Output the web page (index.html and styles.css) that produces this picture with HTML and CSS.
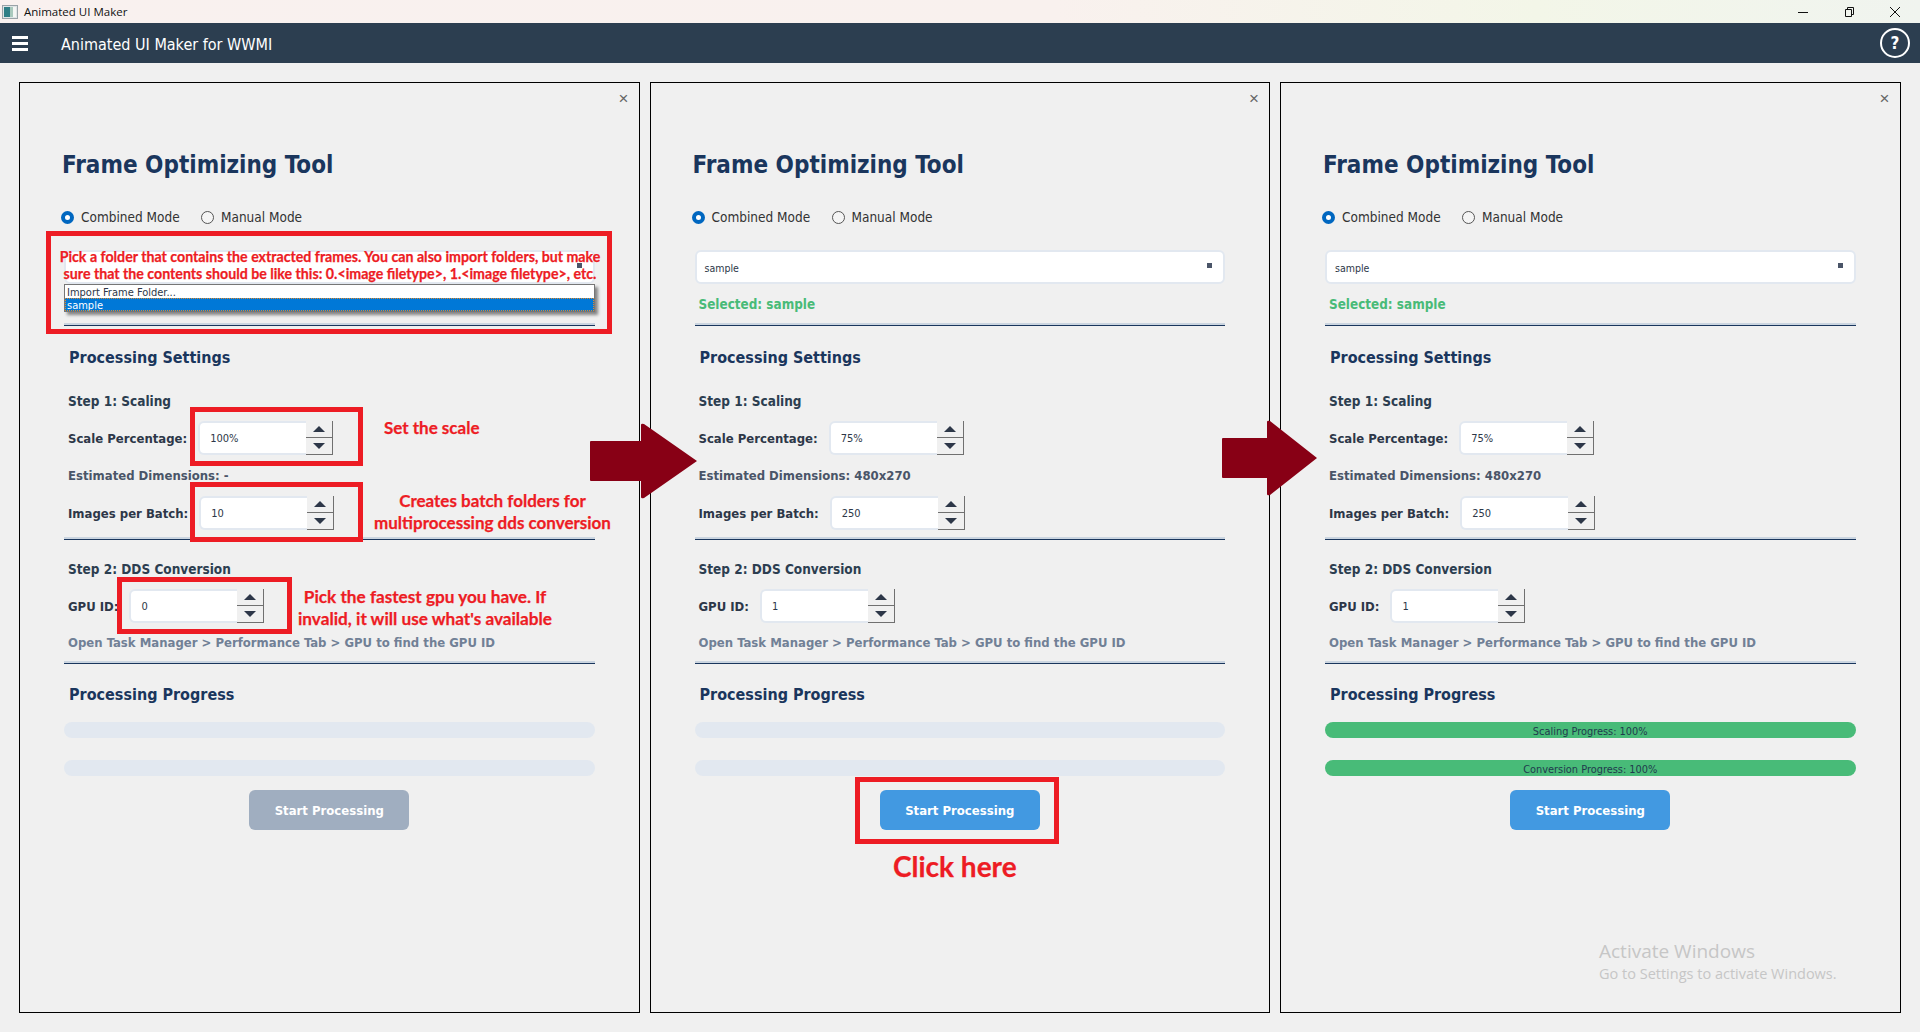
FILE: index.html
```html
<!DOCTYPE html>
<html lang="en">
<head>
    <meta charset="UTF-8">
    <meta name="viewport" content="width=device-width, initial-scale=1.0">
    <title>Animated UI Maker</title>
    <link rel="stylesheet" href="styles.css">
</head>
<body>

    <div class="titlebar">
        <svg class="app-icon" width="16" height="14" viewBox="0 0 16 14">
            <rect x="0.5" y="0.5" width="15" height="13" fill="#dfe5e6" stroke="#9aa3a8"/>
            <rect x="2" y="2" width="6" height="10" fill="#2f7f86"/>
            <rect x="8" y="2" width="3" height="10" fill="#a9c9bd"/>
            <rect x="11" y="2" width="3" height="10" fill="#f4f6f4"/>
        </svg>
        <span class="titlebar-text">Animated UI Maker</span>
        <div class="win-controls">
            <svg width="12" height="12" viewBox="0 0 12 12"><path d="M1 6.5h10" stroke="#111" fill="none"/></svg>
            <svg width="12" height="12" viewBox="0 0 12 12"><path d="M2.5 3.5h6v7h-6zM4.5 3.5v-2h6v7h-2" stroke="#111" fill="none"/></svg>
            <svg width="12" height="12" viewBox="0 0 12 12"><path d="M1 1l10 10M11 1L1 11" stroke="#111" fill="none"/></svg>
        </div>
    </div>

    <header class="appbar">
        <div class="hamburger"><span></span><span></span><span></span></div>
        <div class="appbar-title">Animated UI Maker for WWMI</div>
        <div class="help">?</div>
    </header>

    <main class="panels">

        <!-- panel 1 : annotated, nothing selected -->
        <section class="panel">
            <div class="close">&#215;</div>
            <h1>Frame Optimizing Tool</h1>
            <div class="modes">
                <span class="radio checked"></span><span class="mode-label">Combined Mode</span>
                <span class="radio"></span><span class="mode-label">Manual Mode</span>
            </div>
            <div class="select"><i></i></div>
            <div class="selected"></div>
            <div class="divider first"></div>
            <h2>Processing Settings</h2>
            <h3>Step 1: Scaling</h3>
            <div class="field">
                <label>Scale Percentage:</label>
                <div class="spin"><span class="spin-value">100%</span><div class="spin-btns"><b class="up"></b><b class="down"></b></div></div>
            </div>
            <div class="info">Estimated Dimensions: -</div>
            <div class="field second">
                <label>Images per Batch:</label>
                <div class="spin"><span class="spin-value">10</span><div class="spin-btns"><b class="up"></b><b class="down"></b></div></div>
            </div>
            <div class="divider mid"></div>
            <h3 class="step-two">Step 2: DDS Conversion</h3>
            <div class="field">
                <label>GPU ID:</label>
                <div class="spin"><span class="spin-value">0</span><div class="spin-btns"><b class="up"></b><b class="down"></b></div></div>
            </div>
            <div class="hint">Open Task Manager &gt; Performance Tab &gt; GPU to find the GPU ID</div>
            <div class="divider last"></div>
            <h2 class="progress-title">Processing Progress</h2>
            <div class="bar"></div>
            <div class="bar bar-two"></div>
            <button class="start" disabled>Start Processing</button>
        </section>

        <!-- panel 2 : ready to start -->
        <section class="panel">
            <div class="close">&#215;</div>
            <h1>Frame Optimizing Tool</h1>
            <div class="modes">
                <span class="radio checked"></span><span class="mode-label">Combined Mode</span>
                <span class="radio"></span><span class="mode-label">Manual Mode</span>
            </div>
            <div class="select">sample<i></i></div>
            <div class="selected">Selected: sample</div>
            <div class="divider first"></div>
            <h2>Processing Settings</h2>
            <h3>Step 1: Scaling</h3>
            <div class="field">
                <label>Scale Percentage:</label>
                <div class="spin"><span class="spin-value">75%</span><div class="spin-btns"><b class="up"></b><b class="down"></b></div></div>
            </div>
            <div class="info">Estimated Dimensions: 480x270</div>
            <div class="field second">
                <label>Images per Batch:</label>
                <div class="spin"><span class="spin-value">250</span><div class="spin-btns"><b class="up"></b><b class="down"></b></div></div>
            </div>
            <div class="divider mid"></div>
            <h3 class="step-two">Step 2: DDS Conversion</h3>
            <div class="field">
                <label>GPU ID:</label>
                <div class="spin"><span class="spin-value">1</span><div class="spin-btns"><b class="up"></b><b class="down"></b></div></div>
            </div>
            <div class="hint">Open Task Manager &gt; Performance Tab &gt; GPU to find the GPU ID</div>
            <div class="divider last"></div>
            <h2 class="progress-title">Processing Progress</h2>
            <div class="bar"></div>
            <div class="bar bar-two"></div>
            <button class="start">Start Processing</button>
        </section>

        <!-- panel 3 : finished -->
        <section class="panel">
            <div class="close">&#215;</div>
            <h1>Frame Optimizing Tool</h1>
            <div class="modes">
                <span class="radio checked"></span><span class="mode-label">Combined Mode</span>
                <span class="radio"></span><span class="mode-label">Manual Mode</span>
            </div>
            <div class="select">sample<i></i></div>
            <div class="selected">Selected: sample</div>
            <div class="divider first"></div>
            <h2>Processing Settings</h2>
            <h3>Step 1: Scaling</h3>
            <div class="field">
                <label>Scale Percentage:</label>
                <div class="spin"><span class="spin-value">75%</span><div class="spin-btns"><b class="up"></b><b class="down"></b></div></div>
            </div>
            <div class="info">Estimated Dimensions: 480x270</div>
            <div class="field second">
                <label>Images per Batch:</label>
                <div class="spin"><span class="spin-value">250</span><div class="spin-btns"><b class="up"></b><b class="down"></b></div></div>
            </div>
            <div class="divider mid"></div>
            <h3 class="step-two">Step 2: DDS Conversion</h3>
            <div class="field">
                <label>GPU ID:</label>
                <div class="spin"><span class="spin-value">1</span><div class="spin-btns"><b class="up"></b><b class="down"></b></div></div>
            </div>
            <div class="hint">Open Task Manager &gt; Performance Tab &gt; GPU to find the GPU ID</div>
            <div class="divider last"></div>
            <h2 class="progress-title">Processing Progress</h2>
            <div class="bar done">Scaling Progress: 100%</div>
            <div class="bar bar-two done">Conversion Progress: 100%</div>
            <button class="start">Start Processing</button>
        </section>
    </main>

    <!-- things drawn on top of the screenshot -->
    <div class="dropdown">
        <div class="dropdown-item">Import Frame Folder...</div>
        <div class="dropdown-item active">sample</div>
    </div>

    <div class="mark mark-folder"></div>
    <div class="mark mark-scale"></div>
    <div class="mark mark-batch"></div>
    <div class="mark mark-gpu"></div>
    <div class="mark mark-start"></div>

    <div class="note note-folder">Pick a folder that contains the extracted frames. You can also import folders, but make<br>sure that the contents should be like this: 0.&lt;image filetype&gt;, 1.&lt;image filetype&gt;, etc.</div>
    <div class="note note-scale">Set the scale</div>
    <div class="note note-batch">Creates batch folders for<br>multiprocessing dds conversion</div>
    <div class="note note-gpu">Pick the fastest gpu you have. If<br>invalid, it will use what's available</div>
    <div class="note note-click">Click here</div>

    <svg class="arrow arrow-one" width="108" height="76" viewBox="0 0 108 76">
        <path d="M1 18h50V2q0-2 3-1l53 37-53 37q-3 1-3-1V58H1q-1 0-1-1V19q0-1 1-1z" fill="#880015"/>
    </svg>
    <svg class="arrow arrow-two" width="96" height="76" viewBox="0 0 96 76">
        <path d="M1 18h44V2q0-2 3-1l47 37-47 37q-3 1-3-1V58H1q-1 0-1-1V19q0-1 1-1z" fill="#880015"/>
    </svg>

    <div class="watermark">
        <div class="watermark-title">Activate Windows</div>
        <div class="watermark-text">Go to Settings to activate Windows.</div>
    </div>

</body>
</html>
```

FILE: styles.css
```css
/* general */
body {
    margin: 0;
    height: 1032px;
    overflow: hidden;
    background-color: #f0f0f0;
    font-family: "DejaVu Sans Condensed", "DejaVu Sans", sans-serif;
    color: #2d3748;
}

/* window title bar */
.titlebar {
    height: 23px;
    display: flex;
    align-items: center;
    background: linear-gradient(90deg, #f9f1ef 0%, #f9f1ee 55%, #f3f6e8 80%, #f0f4ef 100%);
}

.app-icon {
    margin-left: 2px;
    margin-right: 6px;
}

.titlebar-text {
    font-family: "Open Sans", sans-serif;
    font-size: 11.5px;
    color: #111;
}

.win-controls {
    margin-left: auto;
    margin-right: 19px;
    display: flex;
    gap: 34px;
}

/* app bar */
.appbar {
    height: 40px;
    display: flex;
    align-items: center;
    background-color: #2c3e50;
    color: white;
}

.hamburger {
    margin-left: 12px;
    width: 16px;
    display: flex;
    flex-direction: column;
    gap: 3px;
}

.hamburger span {
    height: 3px;
    background-color: white;
}

.appbar-title {
    margin-left: 33px;
    padding-top: 2px;
    font-size: 16px;
}

.help {
    margin-left: auto;
    margin-right: 10px;
    width: 26px;
    height: 26px;
    border: 2px solid white;
    border-radius: 50%;
    text-align: center;
    line-height: 26px;
    font-size: 17px;
    font-weight: bold;
}

/* panels */
.panels {
    display: flex;
    gap: 10px;
    padding-top: 19px;
    padding-left: 19px;
}

.panel {
    position: relative;
    box-sizing: border-box;
    width: 620.5px;
    height: 931px;
    padding: 0 44px;
    border: 1px solid black;
}

.close {
    position: absolute;
    top: 6px;
    right: 10px;
    font-family: "Liberation Sans", sans-serif;
    font-size: 17px;
    line-height: 20px;
    color: #666;
}

h1 {
    margin: 67px 0 0 -2px;
    font-size: 24px;
    line-height: 30px;
    font-weight: bold;
    color: #1a365d;
}

.modes {
    margin-top: 27px;
    height: 20px;
    display: flex;
    align-items: center;
    margin-left: -3px;
}

.radio {
    box-sizing: border-box;
    width: 13px;
    height: 13px;
    border: 1px solid #555;
    border-radius: 50%;
    background-color: #f5f5f5;
    margin-right: 7px;
}

.radio.checked {
    border: 4px solid #0067c0;
    background-color: white;
}

.mode-label {
    font-size: 13.5px;
    width: 120px;
    color: #333;
}

.select {
    position: relative;
    box-sizing: border-box;
    margin-top: 23px;
    height: 34px;
    padding-left: 8px;
    line-height: 32px;
    font-size: 10.5px;
    color: #2d3748;
    background-color: white;
    border: 2px solid #e2e8f0;
    border-radius: 6px;
}

.select i {
    position: absolute;
    top: 11px;
    right: 11px;
    width: 5px;
    height: 5px;
    background-color: #4a5568;
}

.selected {
    margin-top: 12px;
    height: 18px;
    margin-left: 4px;
    line-height: 18px;
    font-size: 13.4px;
    font-weight: bold;
    color: #48bb78;
}

.divider {
    height: 2px;
    background-color: #cbd5e0;
    border-bottom: 1px solid #1a365d;
}

.divider.first {
    margin-top: 9px;
}

.divider.mid {
    margin-top: 7px;
}

.divider.last {
    margin-top: 9px;
}

h2 {
    margin: 21px 0 0 5px;
    font-size: 16px;
    line-height: 22px;
    font-weight: bold;
    color: #1a365d;
}

h2.progress-title {
    margin-top: 20px;
}

h3 {
    margin: 23px 0 0 4px;
    font-size: 13.5px;
    line-height: 18px;
    font-weight: bold;
    color: #2c3e50;
}

h3.step-two {
    margin-top: 20px;
}

.field {
    margin-top: 11px;
    margin-left: 4px;
    height: 34px;
    display: flex;
    align-items: center;
    gap: 11px;
}

.field.second {
    margin-top: 11px;
}

.field label {
    font-size: 13px;
    font-weight: bold;
    color: #2d3748;
}

.spin {
    box-sizing: border-box;
    width: 135px;
    height: 34px;
    display: flex;
    background-color: white;
    border: 2px solid #e2e8f0;
    border-right: none;
    border-radius: 6px 0 0 6px;
}

.spin-value {
    flex: 1;
    padding-left: 10px;
    line-height: 32px;
    font-size: 11px;
}

.spin-btns {
    margin: -2px 0;
    width: 27px;
    display: flex;
    flex-direction: column;
    background-color: #f0f0f0;
}

.spin-btns b {
    flex: 1;
    display: flex;
    align-items: center;
    justify-content: center;
    border-right: 1px solid #707070;
    border-bottom: 1px solid #707070;
}

.spin-btns b::after {
    content: "";
    border-left: 6px solid transparent;
    border-right: 6px solid transparent;
}

.spin-btns .up::after {
    border-bottom: 6px solid #2d3748;
}

.spin-btns .down::after {
    border-top: 6px solid #2d3748;
}

.info {
    margin: 12px 0 0 4px;
    height: 18px;
    line-height: 18px;
    font-size: 13px;
    font-weight: bold;
    color: #4a5568;
}

.hint {
    margin: 11px 0 0 4px;
    height: 18px;
    line-height: 18px;
    font-size: 13px;
    font-weight: bold;
    color: #718096;
}

.bar {
    margin-top: 16px;
    height: 16px;
    border-radius: 8px;
    background-color: #e2e8f0;
    text-align: center;
    line-height: 19px;
    font-size: 10.9px;
    color: #1f3a4d;
}

.bar-two {
    margin-top: 22px;
}

.bar.done {
    background-color: #48bb78;
}

.start {
    display: block;
    margin: 14px auto 0;
    width: 160px;
    height: 40px;
    border: none;
    border-radius: 6px;
    background-color: #4299e1;
    color: white;
    font-family: inherit;
    font-size: 13px;
    font-weight: bold;
}

.start:disabled {
    background-color: #a0aec0;
}

/* open list of the first panel */
.dropdown {
    position: absolute;
    left: 64px;
    top: 284px;
    box-sizing: border-box;
    width: 531px;
    height: 28px;
    background-color: white;
    border: 1px solid #767676;
    box-shadow: 3px 3px 3px rgba(0, 0, 0, 0.45);
    font-size: 11px;
    line-height: 15px;
    color: #2d3748;
}

.dropdown-item {
    height: 13px;
    padding-left: 2px;
}

.dropdown-item.active {
    background-color: #0078d7;
    color: white;
    outline: 1px dotted #e08a2e;
    outline-offset: -1px;
}

/* red marks */
.mark {
    position: absolute;
    box-sizing: border-box;
    border: 5px solid #ed1c24;
}

.mark-folder {
    left: 46px;
    top: 231px;
    width: 566px;
    height: 103px;
}

.mark-scale {
    left: 190px;
    top: 407px;
    width: 173px;
    height: 59px;
}

.mark-batch {
    left: 190px;
    top: 482px;
    width: 173px;
    height: 60px;
}

.mark-gpu {
    left: 117px;
    top: 577px;
    width: 175px;
    height: 57px;
}

.mark-start {
    left: 855px;
    top: 777px;
    width: 204px;
    height: 67px;
}

.note {
    position: absolute;
    font-family: Lato, sans-serif;
    font-weight: bold;
    color: #ed1c24;
    -webkit-text-stroke: 0.25px #ed1c24;
    text-align: center;
    white-space: nowrap;
}

.note-folder {
    left: 59px;
    top: 248px;
    width: 542px;
    font-size: 14.2px;
    line-height: 17px;
}

.note-scale {
    left: 384px;
    top: 418px;
    width: 93px;
    font-size: 17px;
    line-height: 20px;
}

.note-batch {
    left: 374px;
    top: 490px;
    width: 237px;
    font-size: 17px;
    line-height: 22px;
}

.note-gpu {
    left: 298px;
    top: 586px;
    width: 254px;
    font-size: 17.2px;
    line-height: 22px;
}

.note-click {
    left: 893px;
    top: 851px;
    width: 122px;
    font-size: 28px;
    line-height: 30px;
}

.arrow {
    position: absolute;
}

.arrow-one {
    left: 590px;
    top: 423px;
}

.arrow-two {
    left: 1222px;
    top: 420px;
}

/* windows watermark */
.watermark {
    position: absolute;
    left: 1599px;
    top: 938px;
    font-family: "Open Sans", sans-serif;
    color: #c6c6c6;
}

.watermark-title {
    font-size: 19px;
    line-height: 26px;
}

.watermark-text {
    font-size: 14.5px;
    line-height: 20px;
}
```
